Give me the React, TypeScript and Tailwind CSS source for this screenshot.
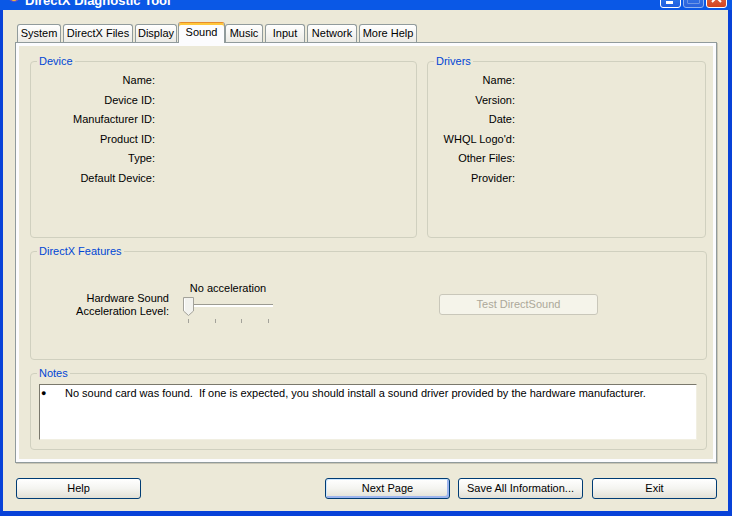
const TABS = [
  { label: "System", cls: "ml-[14px] w-[44px]" },
  { label: "DirectX Files", cls: "ml-[2px] w-[70px]" },
  { label: "Display", cls: "ml-[2px] w-[42px]" },
  { label: "Sound", cls: "ml-[1px] w-[47px]", active: true },
  { label: "Music", cls: "w-[38px]" },
  { label: "Input", cls: "ml-[2px] w-[40px]" },
  { label: "Network", cls: "ml-[2px] w-[50px]" },
  { label: "More Help", cls: "ml-[2px] w-[58px]" },
];

const DEVICE_FIELDS = [
  "Name:",
  "Device ID:",
  "Manufacturer ID:",
  "Product ID:",
  "Type:",
  "Default Device:",
];

const DRIVER_FIELDS = [
  "Name:",
  "Version:",
  "Date:",
  "WHQL Logo'd:",
  "Other Files:",
  "Provider:",
];

function Group({
  title,
  className,
  children,
}: {
  title: string;
  className: string;
  children?: React.ReactNode;
}) {
  return (
    <fieldset
      className={`rounded-[4px] border border-[#D0D0BF] ${className}`}
    >
      <legend className="ml-[6px] px-[2px] text-[11px] leading-[13px] text-[#0046D5]">
        {title}
      </legend>
      {children}
    </fieldset>
  );
}

function FieldList({ fields, width }: { fields: string[]; width: string }) {
  return (
    <div className={`flex flex-col gap-[6.6px] pt-[6px] ${width}`}>
      {fields.map((f, i) => (
        <div key={i} className="text-right text-[11px] leading-[13px]">
          {f}
        </div>
      ))}
    </div>
  );
}

function XpButton({
  children,
  className,
  isDefault,
}: {
  children: React.ReactNode;
  className: string;
  isDefault?: boolean;
}) {
  return (
    <button
      className={`h-[21px] w-[125px] rounded-[3px] border border-[#003C74] bg-linear-to-b from-white via-[#F4F4F0] to-[#E2E0D5] text-[11px] leading-[13px] text-black ${
        isDefault
          ? "shadow-[inset_1px_1px_0_#CEE7FF,inset_-2px_-2px_0_#9DB5EE]"
          : ""
      } ${className}`}
    >
      {children}
    </button>
  );
}

function Slider() {
  return (
    <div className="ml-[13px] flex w-[92px] flex-col">
      <div className="text-center text-[11px] leading-[13px]">
        No acceleration
      </div>
      <svg width="92" height="28" className="mt-[1px]">
        <rect x="2" y="8" width="89" height="1" fill="#9C9B91" />
        <rect x="2" y="9" width="89" height="2" fill="#FFFFFF" />
        <polygon
          points="1.5,1.5 11.5,1.5 11.5,15 6.5,19.5 1.5,15"
          fill="#F2F2EE"
          stroke="#A3A29A"
        />
        <line x1="2.5" y1="3" x2="2.5" y2="14.5" stroke="#FFFFFF" />
        <rect x="6" y="23" width="1" height="4" fill="#A3A29A" />
        <rect x="33" y="23" width="1" height="4" fill="#A3A29A" />
        <rect x="59" y="23" width="1" height="4" fill="#A3A29A" />
        <rect x="86" y="23" width="1" height="4" fill="#A3A29A" />
      </svg>
    </div>
  );
}

function TitleBar() {
  return (
    <div className="h-[10px] overflow-hidden bg-[#0A58E6]">
      <div className="-mt-[15px] flex h-[24px] items-center">
        <svg width="16" height="16" className="ml-[6px] self-end mb-[5px]">
          <circle cx="8" cy="8" r="6" fill="#6A4FC8" />
          <circle cx="8" cy="10" r="3" fill="#F2C230" />
        </svg>
        <span className="ml-[3px] self-end mb-[1px] text-[13px] font-bold leading-[15px] text-white">
          DirectX Diagnostic Tool
        </span>
        <div className="ml-auto mr-[5px] flex gap-[2px]">
          <div className="relative h-[21px] w-[21px] rounded-[3px] border border-white bg-linear-to-b from-[#3C8CF3] to-[#1F5EE0]">
            <div className="absolute left-[5px] top-[13px] h-[3px] w-[7px] bg-white" />
          </div>
          <div className="h-[21px] w-[21px] rounded-[3px] border border-[#8FB3F0] bg-linear-to-b from-[#3C80EE] to-[#2A62DC] p-[3px]">
            <div className="h-full w-full rounded-[1px] border border-[#6F97E6]" />
          </div>
          <div className="relative h-[21px] w-[21px] rounded-[3px] border border-white bg-linear-to-b from-[#E57A5B] to-[#D2431E]">
            <svg width="19" height="19" className="absolute left-0 top-0">
              <path d="M5 5 L14 14 M14 5 L5 14" stroke="#FFFFFF" strokeWidth="2" />
            </svg>
          </div>
        </div>
      </div>
    </div>
  );
}

export default function App() {
  return (
    <div className="flex h-[516px] w-[732px] flex-col overflow-hidden bg-[#0842D8] font-['Liberation_Sans',Arial,sans-serif] text-black">
      <TitleBar />
      <div className="mb-[5px] ml-[3px] mr-[4px] flex flex-1 flex-col bg-[#ECE9D8]">
        {/* Tabs */}
        <div className="mt-[12px] flex h-[20px] items-end">
          {TABS.map((t) =>
            t.active ? (
              <div
                key={t.label}
                className={`relative z-10 -mb-[1px] flex h-[21px] items-center justify-center rounded-t-[3px] border-x border-t border-[#919B9C] border-t-[#E68B2C] bg-[#FCFCFE] pb-[1px] text-[11px] leading-[13px] shadow-[inset_0_2px_0_#FFC73C] ${t.cls}`}
              >
                {t.label}
              </div>
            ) : (
              <div
                key={t.label}
                className={`flex h-[18px] items-center justify-center rounded-t-[3px] border-x border-t border-[#919B9C] bg-linear-to-b from-white to-[#ECEBE5] text-[11px] leading-[13px] ${t.cls}`}
              >
                {t.label}
              </div>
            )
          )}
        </div>

        {/* Tab page */}
        <div className="ml-[12px] flex h-[421px] w-[702px] flex-col border border-[#919B9C] bg-[#FCFCFE] p-[3px] shadow-[1px_1px_0_#C9C6B6]">
          <div className="flex flex-1 flex-col bg-[#ECE9D8]">
            <div className="mt-[9px] flex">
              <Group title="Device" className="ml-[11px] h-[183px] w-[387px]">
                <FieldList fields={DEVICE_FIELDS} width="w-[124px]" />
              </Group>
              <Group title="Drivers" className="ml-[10px] h-[183px] w-[279px]">
                <FieldList fields={DRIVER_FIELDS} width="w-[87px]" />
              </Group>
            </div>

            <Group
              title="DirectX Features"
              className="ml-[11px] mt-[7px] h-[115px] w-[677px]"
            >
              <div className="flex items-start pt-[24px]">
                <div className="mt-[10px] w-[138px] text-right text-[11px] leading-[13px]">
                  <div>Hardware Sound</div>
                  <div>Acceleration Level:</div>
                </div>
                <Slider />
                <div className="ml-[165px] mt-[12px] flex h-[21px] w-[159px] items-center justify-center rounded-[3px] border border-[#C9C7BA] bg-[#F5F4EA] text-[11px] leading-[13px] text-[#ACA899]">
                  Test DirectSound
                </div>
              </div>
            </Group>

            <Group
              title="Notes"
              className="ml-[11px] mt-[7px] h-[83px] w-[677px]"
            >
              <div className="ml-[8px] mt-[4px] h-[56px] w-[658px] border border-b-[#F1EFE2] border-l-[#7A786C] border-r-[#F1EFE2] border-t-[#7A786C] bg-white">
                <div className="flex pl-[1px] pt-[2px] text-[11px] leading-[13px]">
                  <span className="w-[24px] text-[9px]">●</span>
                  <span className="whitespace-pre">
                    No sound card was found.  If one is expected, you should install a sound driver provided by the hardware manufacturer.
                  </span>
                </div>
              </div>
            </Group>
          </div>
        </div>

        {/* Bottom buttons */}
        <div className="mt-[15px] flex">
          <XpButton className="ml-[13px]">Help</XpButton>
          <XpButton className="ml-[184px]" isDefault>
            Next Page
          </XpButton>
          <XpButton className="ml-[8px]">Save All Information...</XpButton>
          <XpButton className="ml-[9px]">Exit</XpButton>
        </div>
      </div>
    </div>
  );
}
